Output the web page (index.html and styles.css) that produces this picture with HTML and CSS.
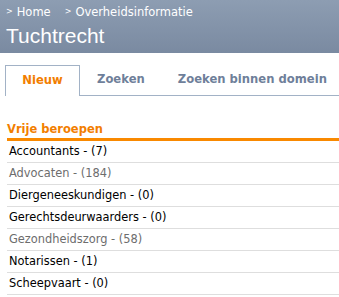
FILE: index.html
```html
<!DOCTYPE html>
<html>
<head>
<meta charset="utf-8">
<link rel="stylesheet" href="styles.css">
</head>
<body>
<div class="header">
  <div class="crumbs">
    <span class="crumb"><span class="chev">&gt;</span>Home</span>
    <span class="crumb"><span class="chev">&gt;</span>Overheidsinformatie</span>
  </div>
  <h1 class="title">Tuchtrecht</h1>
</div>
<div class="tabs">
  <div class="tab active">Nieuw</div>
  <div class="tab">Zoeken</div>
  <div class="tab">Zoeken binnen domein</div>
  <div class="tab-fill"></div>
</div>
<div class="section">
  <h2 class="section-title">Vrije beroepen</h2>
  <ul class="list">
    <li class="item">Accountants - (7)</li>
    <li class="item visited">Advocaten - (184)</li>
    <li class="item">Diergeneeskundigen - (0)</li>
    <li class="item">Gerechtsdeurwaarders - (0)</li>
    <li class="item visited">Gezondheidszorg - (58)</li>
    <li class="item">Notarissen - (1)</li>
    <li class="item">Scheepvaart - (0)</li>
  </ul>
</div>
</body>
</html>
```
FILE: styles.css
```css
html, body {
  margin: 0;
  padding: 0;
  background: #fff;
}
body {
  font-family: "DejaVu Sans", Verdana, sans-serif;
  font-size: 11px;
  color: #000;
}
.header {
  height: 53px;
  background: linear-gradient(#8d9db2, #7a8aa1);
  color: #fff;
  padding: 0 0 0 6px;
  box-sizing: border-box;
}
.crumbs {
  display: flex;
  height: 23px;
  align-items: center;
  font-size: 11.5px;
  white-space: nowrap;
}
.crumb {
  margin-right: 14px;
}
.chev {
  font-size: 8px;
  margin-right: 4px;
  position: relative;
  top: -2px;
}
.title {
  margin: 0;
  font-family: "Liberation Sans", Arial, sans-serif;
  font-weight: normal;
  font-size: 21px;
  line-height: 25px;
}
.tabs {
  display: flex;
  margin-top: 12px;
  height: 31px;
  padding-left: 5px;
}
.tab {
  box-sizing: border-box;
  flex-shrink: 0;
  white-space: nowrap;
  height: 31px;
  padding: 0 16px 2px 17px;
  display: flex;
  align-items: center;
  font-weight: bold;
  font-size: 11.6px;
  color: #6f7f9a;
  border-bottom: 1px solid #a2b2c6;
}
.tab.active {
  color: #f27e00;
  border: 1px solid #a2b2c6;
  border-bottom: none;
  width: 75px;
  justify-content: center;
  padding: 0 0 2px 0;
}
.tab-fill {
  flex: 1;
  border-bottom: 1px solid #a2b2c6;
}
.section {
  padding-left: 7px;
  margin-top: 25px;
}
.section-title {
  margin: 0;
  font-size: 11.5px;
  font-weight: bold;
  color: #f27e00;
  border-bottom: 3px solid #f98900;
  line-height: 17px;
  padding-bottom: 0;
}
.list {
  list-style: none;
  margin: 0;
  padding: 0;
}
.item {
  height: 21px;
  line-height: 21px;
  border-bottom: 1px solid #dedede;
  padding-left: 2px;
  font-size: 11.4px;
  color: #000;
}
.item.visited {
  color: #6d6d6d;
}
```
